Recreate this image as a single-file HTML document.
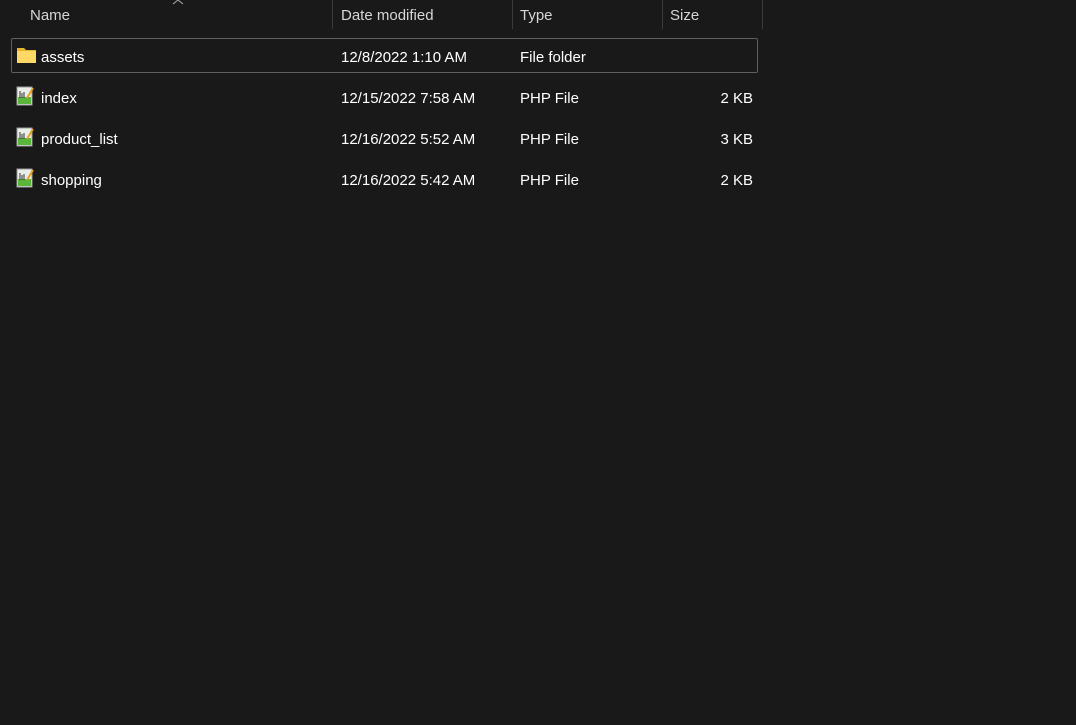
<!DOCTYPE html>
<html><head><style>
body{margin:0;width:1076px;height:725px;background:#191919;font-family:"Liberation Sans",sans-serif;font-size:15px;color:#fff;position:relative;overflow:hidden}
.a{position:absolute;white-space:nowrap}
.h{color:#d6d6d6;top:7px}
.d{position:absolute;top:0;width:1px;height:29px;background:#3a3a3a}
.r{position:absolute;left:0;width:1076px;height:34px}
.r .a{top:10px}
</style></head><body>
<svg class="a" style="left:172px;top:0" width="12" height="5" viewBox="0 0 12 5"><path d="M1 4l5-4 5 4" stroke="#aaa" fill="none"/></svg>
<div class="a h" style="left:30px">Name</div>
<div class="d" style="left:332px"></div>
<div class="a h" style="left:341px">Date modified</div>
<div class="d" style="left:512px"></div>
<div class="a h" style="left:520px">Type</div>
<div class="d" style="left:662px"></div>
<div class="a h" style="left:670px">Size</div>
<div class="d" style="left:762px"></div>

<div style="position:absolute;left:11px;top:38px;width:745px;height:33px;border:1px solid #5e5e5e;border-radius:2px"></div>

<div class="r" style="top:39px">
<svg class="a" style="left:17px;top:8px" width="19" height="16" viewBox="0 0 19 16"><path d="M0 1h7l2 2h10v13H0z" fill="#e8b62c"/><rect x="0" y="4" width="19" height="12" fill="#ffd866"/></svg>
<div class="a" style="left:41px">assets</div><div class="a" style="left:341px">12/8/2022 1:10 AM</div><div class="a" style="left:520px">File folder</div></div>

<div class="r" style="top:80px">
<svg class="a" style="left:16px;top:6px" width="18" height="20" viewBox="0 0 18 20"><rect x="1" y="1" width="15" height="18" fill="#e9eee9" stroke="#999"/><rect x="2" y="11" width="13" height="7" fill="#5ab53a"/><path d="M4 5v7M6 7v5M8 6v6" stroke="#333"/><path d="M11 12l6-10" stroke="#e8a020" stroke-width="2"/></svg>
<div class="a" style="left:41px">index</div><div class="a" style="left:341px">12/15/2022 7:58 AM</div><div class="a" style="left:520px">PHP File</div><div class="a" style="right:323px">2 KB</div></div>

<div class="r" style="top:121px">
<svg class="a" style="left:16px;top:6px" width="18" height="20" viewBox="0 0 18 20"><rect x="1" y="1" width="15" height="18" fill="#e9eee9" stroke="#999"/><rect x="2" y="11" width="13" height="7" fill="#5ab53a"/><path d="M4 5v7M6 7v5M8 6v6" stroke="#333"/><path d="M11 12l6-10" stroke="#e8a020" stroke-width="2"/></svg>
<div class="a" style="left:41px">product_list</div><div class="a" style="left:341px">12/16/2022 5:52 AM</div><div class="a" style="left:520px">PHP File</div><div class="a" style="right:323px">3 KB</div></div>

<div class="r" style="top:162px">
<svg class="a" style="left:16px;top:6px" width="18" height="20" viewBox="0 0 18 20"><rect x="1" y="1" width="15" height="18" fill="#e9eee9" stroke="#999"/><rect x="2" y="11" width="13" height="7" fill="#5ab53a"/><path d="M4 5v7M6 7v5M8 6v6" stroke="#333"/><path d="M11 12l6-10" stroke="#e8a020" stroke-width="2"/></svg>
<div class="a" style="left:41px">shopping</div><div class="a" style="left:341px">12/16/2022 5:42 AM</div><div class="a" style="left:520px">PHP File</div><div class="a" style="right:323px">2 KB</div></div>
</body></html>
